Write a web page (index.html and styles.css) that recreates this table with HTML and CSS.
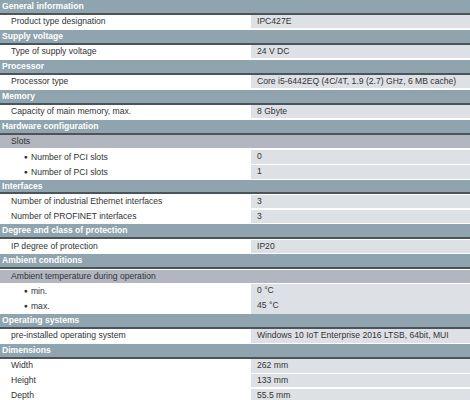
FILE: index.html
```html
<!DOCTYPE html>
<html>
<head>
<meta charset="utf-8">
<link rel="stylesheet" href="styles.css">
</head>
<body>
<div class="spec">
  <div class="hdr">General information</div>
  <div class="row"><div class="k">Product type designation</div><div class="v">IPC427E</div></div>

  <div class="hdr">Supply voltage</div>
  <div class="row"><div class="k">Type of supply voltage</div><div class="v">24 V DC</div></div>

  <div class="hdr">Processor</div>
  <div class="row"><div class="k">Processor type</div><div class="v">Core i5-6442EQ (4C/4T, 1.9 (2.7) GHz, 6 MB cache)</div></div>

  <div class="hdr">Memory</div>
  <div class="row"><div class="k">Capacity of main memory, max.</div><div class="v">8 Gbyte</div></div>

  <div class="hdr">Hardware configuration</div>
  <div class="sub">Slots</div>
  <div class="row"><div class="k bul">Number of PCI slots</div><div class="v">0</div></div>
  <div class="row"><div class="k bul">Number of PCI slots</div><div class="v">1</div></div>

  <div class="hdr">Interfaces</div>
  <div class="row"><div class="k">Number of industrial Ethernet interfaces</div><div class="v">3</div></div>
  <div class="row"><div class="k">Number of PROFINET interfaces</div><div class="v">3</div></div>

  <div class="hdr">Degree and class of protection</div>
  <div class="row"><div class="k">IP degree of protection</div><div class="v">IP20</div></div>

  <div class="hdr">Ambient conditions</div>
  <div class="sub">Ambient temperature during operation</div>
  <div class="row"><div class="k bul">min.</div><div class="v">0 °C</div></div>
  <div class="row"><div class="k bul">max.</div><div class="v">45 °C</div></div>

  <div class="hdr">Operating systems</div>
  <div class="row"><div class="k">pre-installed operating system</div><div class="v">Windows 10 IoT Enterprise 2016 LTSB, 64bit, MUI</div></div>

  <div class="hdr">Dimensions</div>
  <div class="row"><div class="k">Width</div><div class="v">262 mm</div></div>
  <div class="row"><div class="k">Height</div><div class="v">133 mm</div></div>
  <div class="row"><div class="k">Depth</div><div class="v">55.5 mm</div></div>
</div>
</body>
</html>
```
FILE: styles.css
```css
html, body {
  margin: 0;
  padding: 0;
  background: #ffffff;
}

.spec {
  font-family: "Liberation Sans", Arial, sans-serif;
  font-size: 8.6px;
  color: #333333;
  width: 470px;
}

.hdr {
  height: 12.65px;
  line-height: 12.65px;
  background: #8fa4ae;
  border-bottom: 2px solid #4b5459;
  color: #ffffff;
  font-weight: bold;
  padding-left: 2px;
  margin-bottom: 0.5px;
}

.sub {
  height: 13.35px;
  line-height: 13.35px;
  background: #b1b6c0;
  padding-left: 11px;
  margin-bottom: 1.5px;
}

.row {
  display: grid;
  grid-template-columns: 251px 1fr;
  height: 13.35px;
  line-height: 13.35px;
  margin-bottom: 1.5px;
}

.k {
  padding-left: 11px;
  background: #ffffff;
  white-space: nowrap;
}

.k.bul {
  padding-left: 24px;
}

.k.bul::before {
  content: "\25CF";
  font-size: 6.5px;
  vertical-align: 1px;
  margin-right: 3px;
}

.v {
  background: #dde1e5;
  padding-left: 6px;
  white-space: nowrap;
}
```
